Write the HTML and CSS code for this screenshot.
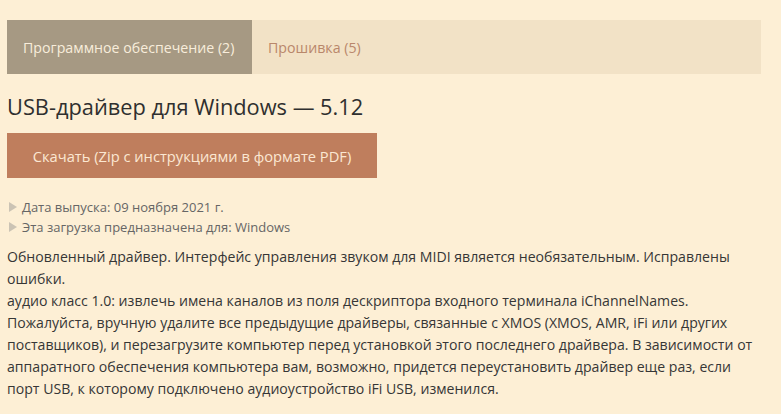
FILE: index.html
```html
<!DOCTYPE html>
<html lang="ru">
<head>
    <meta charset="UTF-8">
    <meta name="viewport" content="width=device-width, initial-scale=1.0">
    <title>USB-драйвер для Windows</title>
    <link rel="stylesheet" href="styles.css">
</head>
<body>
    <div class="downloads">
        <div class="tabs">
            <div class="tab active">Программное обеспечение (2)</div>
            <div class="tab">Прошивка (5)</div>
        </div>

        <div class="item">
            <h2 class="item-title">USB-драйвер для Windows — 5.12</h2>
            <a class="download-button" href="#">Скачать (Zip с инструкциями в формате PDF)</a>
            <ul class="meta">
                <li>Дата выпуска: 09 ноября 2021 г.</li>
                <li>Эта загрузка предназначена для: Windows</li>
            </ul>
            <p class="notes">
                Обновленный драйвер. Интерфейс управления звуком для MIDI является необязательным. Исправлены ошибки.<br>
                аудио класс 1.0: извлечь имена каналов из поля дескриптора входного терминала iChannelNames.<br>
                Пожалуйста, вручную удалите все предыдущие драйверы, связанные с XMOS (XMOS, AMR, iFi или других поставщиков), и перезагрузите компьютер перед установкой этого последнего драйвера. В зависимости от аппаратного обеспечения компьютера вам, возможно, придется переустановить драйвер еще раз, если порт USB, к которому подключено аудиоустройство iFi USB, изменился.
            </p>
        </div>
    </div>
</body>
</html>
```

FILE: styles.css
```css
body {
    margin: 0;
    background: #fdefd5;
    font-family: "Open Sans", "Noto Sans", sans-serif;
    color: #363636;
}

.downloads {
    width: 754px;
    padding: 20px 0 0 7px;
}

.tabs {
    display: flex;
    height: 54px;
    background: #f2e2c6;
}

.tab {
    display: flex;
    align-items: center;
    padding: 0 16px;
    font-size: 14.2px;
    color: #b9876b;
}

.tab.active {
    width: 213px;
    background: #a69983;
    color: #f8eddb;
}

.item-title {
    margin: 18px 0 0;
    font-size: 21.8px;
    font-weight: normal;
    line-height: 30px;
    color: #2f2f2f;
}

.download-button {
    display: flex;
    align-items: center;
    justify-content: center;
    width: 370px;
    height: 45px;
    margin-top: 11px;
    background: #bf7e5d;
    color: #fbe7d2;
    font-size: 14.7px;
    text-decoration: none;
}

.meta {
    list-style: none;
    margin: 19px 0 0;
    padding: 0;
    font-size: 13px;
    line-height: 20px;
    color: #666;
}

.meta li {
    display: flex;
    align-items: center;
    gap: 5px;
}

.meta li:before {
    content: '';
    width: 0;
    height: 0;
    margin-left: 2px;
    border-left: 8px solid #cbc3b4;
    border-top: 5px solid transparent;
    border-bottom: 5px solid transparent;
}

.notes {
    margin: 9px 0 0;
    font-size: 14.1px;
    line-height: 22px;
}
```
